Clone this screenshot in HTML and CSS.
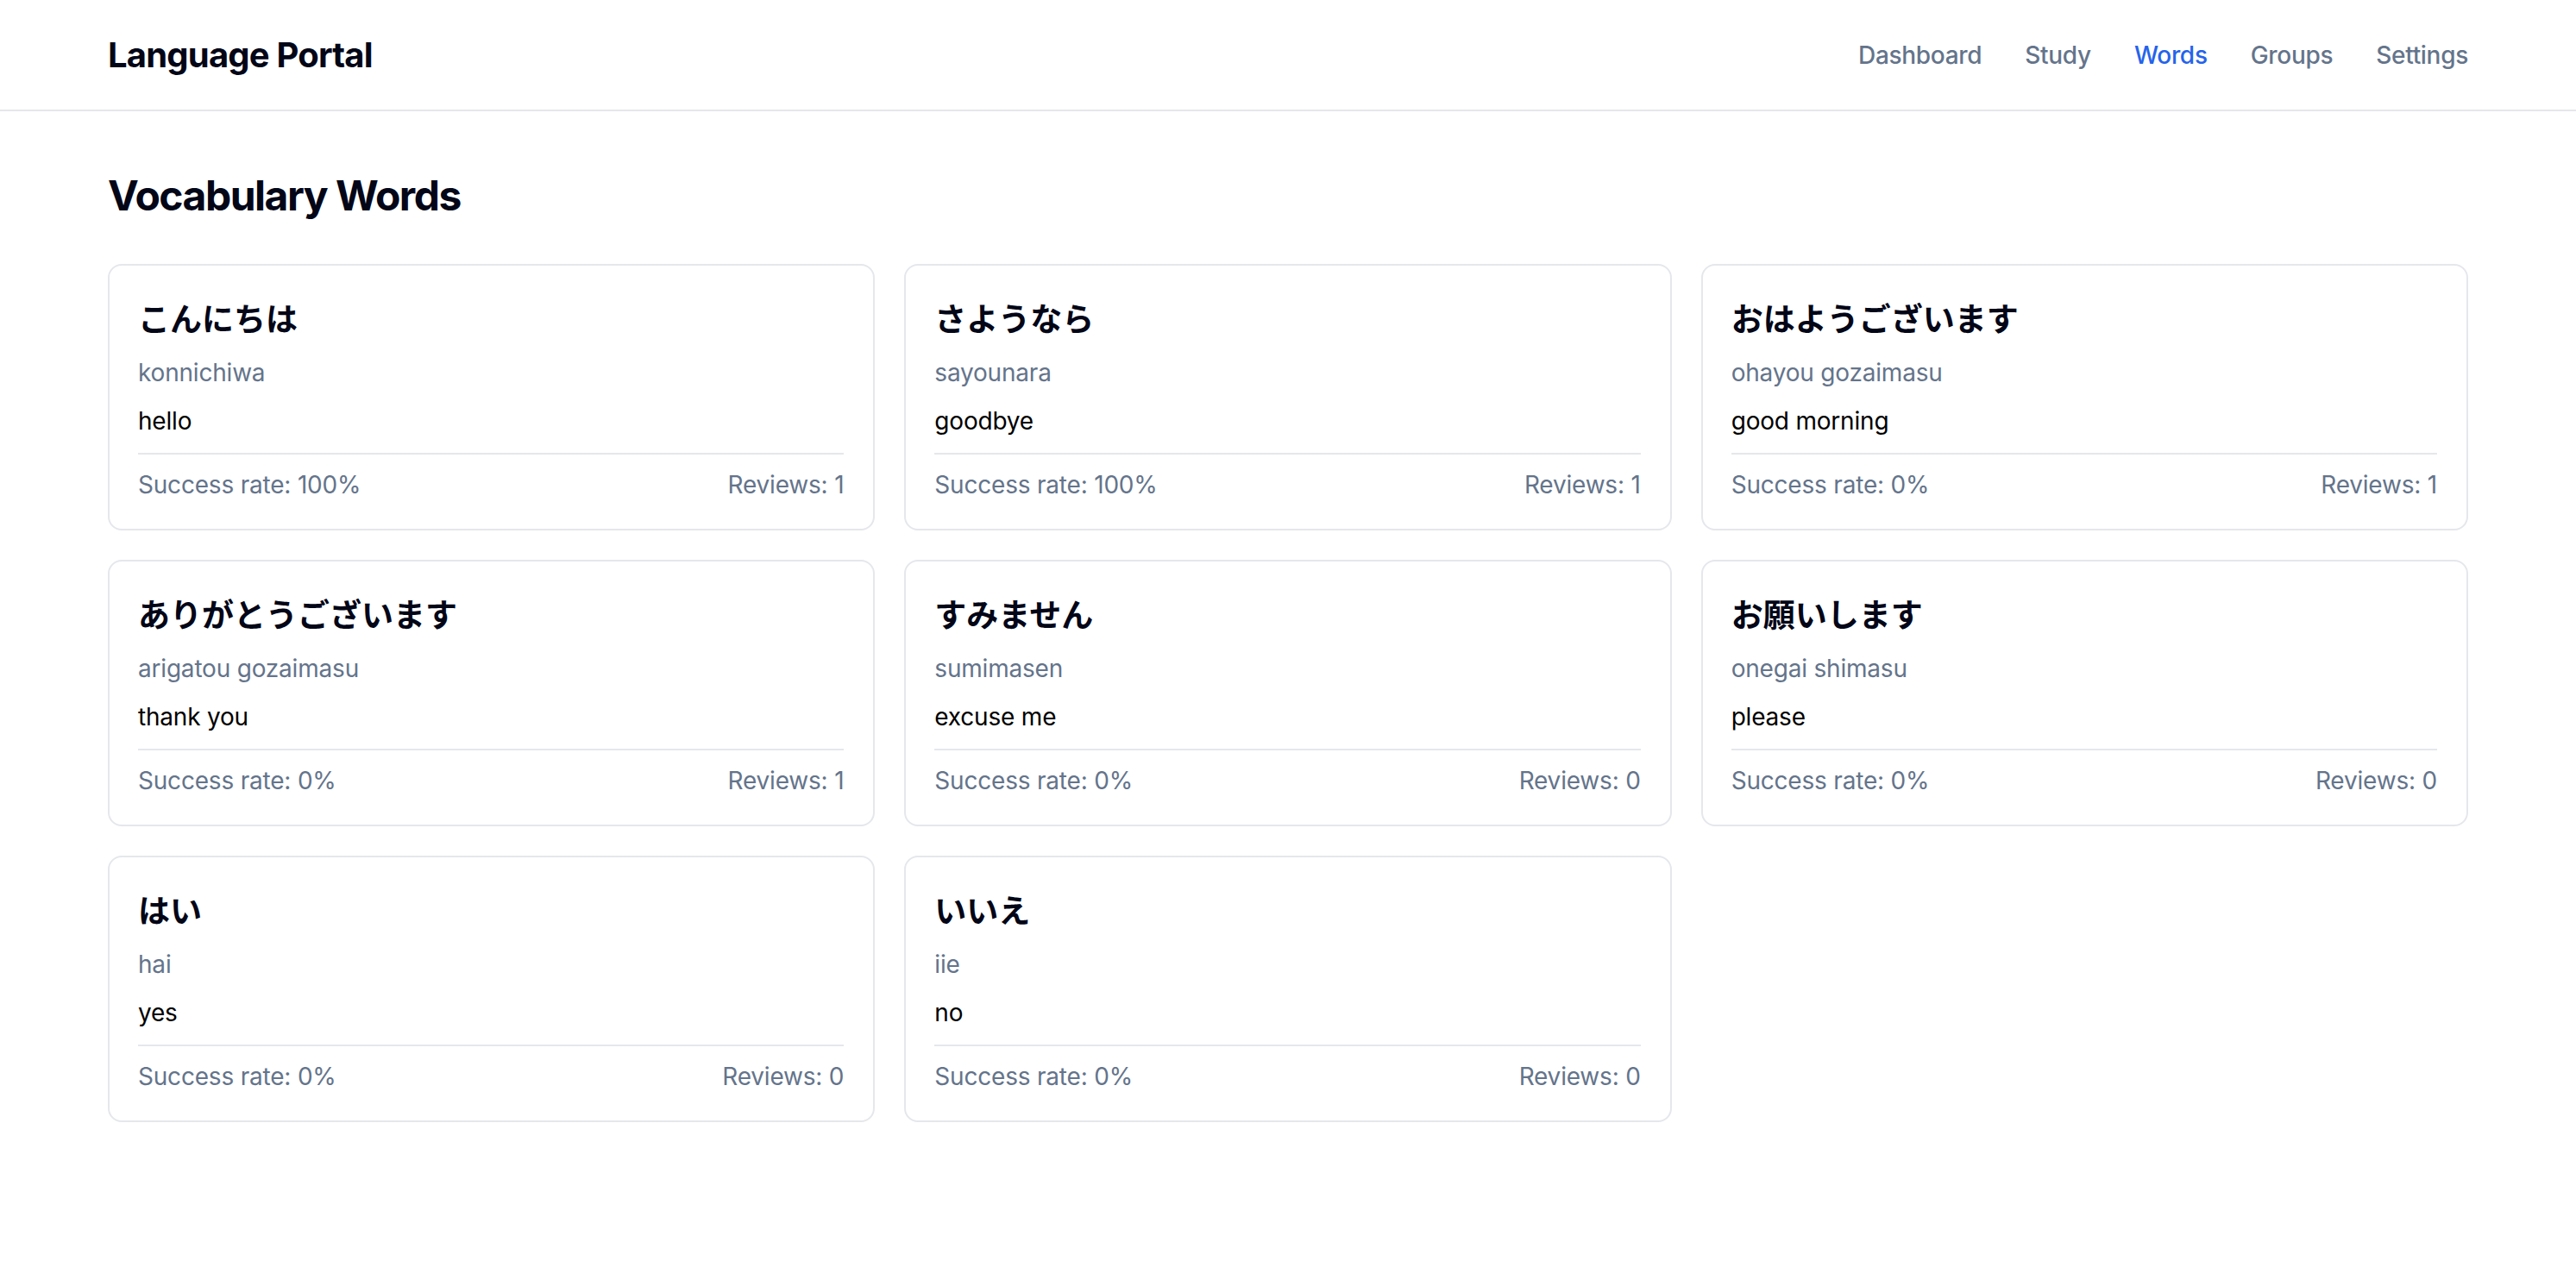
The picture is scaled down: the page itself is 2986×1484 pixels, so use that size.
FILE: index.html
```html
<!DOCTYPE html>
<html lang="en">
<head>
<meta charset="utf-8">
<title>Language Portal</title>
<link rel="stylesheet" href="styles.css">
</head>
<body>
<header class="site-header">
  <div class="container header-inner">
    <div class="brand">Language Portal</div>
    <nav class="nav">
      <a class="nav-link" href="#">Dashboard</a>
      <a class="nav-link" href="#">Study</a>
      <a class="nav-link active" href="#">Words</a>
      <a class="nav-link" href="#">Groups</a>
      <a class="nav-link" href="#">Settings</a>
    </nav>
  </div>
</header>
<main class="container main">
  <h1 class="page-title">Vocabulary Words</h1>
  <div class="grid">
    <div class="card">
      <div class="jp">こんにちは</div>
      <div class="romaji">konnichiwa</div>
      <div class="en">hello</div>
      <div class="stats"><span>Success rate: 100%</span><span>Reviews: 1</span></div>
    </div>
    <div class="card">
      <div class="jp">さようなら</div>
      <div class="romaji">sayounara</div>
      <div class="en">goodbye</div>
      <div class="stats"><span>Success rate: 100%</span><span>Reviews: 1</span></div>
    </div>
    <div class="card">
      <div class="jp">おはようございます</div>
      <div class="romaji">ohayou gozaimasu</div>
      <div class="en">good morning</div>
      <div class="stats"><span>Success rate: 0%</span><span>Reviews: 1</span></div>
    </div>
    <div class="card">
      <div class="jp">ありがとうございます</div>
      <div class="romaji">arigatou gozaimasu</div>
      <div class="en">thank you</div>
      <div class="stats"><span>Success rate: 0%</span><span>Reviews: 1</span></div>
    </div>
    <div class="card">
      <div class="jp">すみません</div>
      <div class="romaji">sumimasen</div>
      <div class="en">excuse me</div>
      <div class="stats"><span>Success rate: 0%</span><span>Reviews: 0</span></div>
    </div>
    <div class="card">
      <div class="jp">お願いします</div>
      <div class="romaji">onegai shimasu</div>
      <div class="en">please</div>
      <div class="stats"><span>Success rate: 0%</span><span>Reviews: 0</span></div>
    </div>
    <div class="card">
      <div class="jp">はい</div>
      <div class="romaji">hai</div>
      <div class="en">yes</div>
      <div class="stats"><span>Success rate: 0%</span><span>Reviews: 0</span></div>
    </div>
    <div class="card">
      <div class="jp">いいえ</div>
      <div class="romaji">iie</div>
      <div class="en">no</div>
      <div class="stats"><span>Success rate: 0%</span><span>Reviews: 0</span></div>
    </div>
  </div>
</main>
</body>
</html>
```
FILE: styles.css
```css
* { box-sizing: border-box; }
html, body { margin: 0; padding: 0; }
body {
  background: #ffffff;
  font-family: Inter, "Noto Sans CJK JP", sans-serif;
  color: #020617;
}
.container {
  padding-left: 125px;
  padding-right: 125px;
}
.site-header {
  border-bottom: 2px solid #e5e7eb;
}
.header-inner {
  height: 127px;
  display: flex;
  align-items: center;
  justify-content: space-between;
}
.brand {
  font-size: 40px;
  font-weight: 700;
  color: #020617;
  letter-spacing: -0.8px;
}
.nav {
  display: flex;
  gap: 50px;
}
.nav-link {
  font-size: 28px;
  font-weight: 500;
  color: #64748b;
  text-decoration: none;
  letter-spacing: -0.3px;
}
.nav-link.active { color: #2563eb; }
.main {
  padding-top: 66px;
  padding-bottom: 64px;
}
.page-title {
  margin: 0 0 47px 0;
  font-size: 48px;
  line-height: 64px;
  font-weight: 700;
  color: #020617;
  letter-spacing: -1.5px;
}
.grid {
  display: grid;
  grid-template-columns: repeat(3, 1fr);
  gap: 34px;
}
.card {
  border: 2px solid #e5e7eb;
  border-radius: 16px;
  padding: 34px 34px 31px 33px;
  background: #fff;
}
.jp {
  font-family: "Noto Sans CJK JP", sans-serif;
  font-size: 37px;
  line-height: 52px;
  font-weight: 600;
  color: #020617;
}
.romaji {
  margin-top: 18px;
  font-size: 28px;
  line-height: 40px;
  color: #64748b;
  letter-spacing: -0.2px;
}
.en {
  margin-top: 16px;
  font-size: 28px;
  line-height: 40px;
  color: #000;
  letter-spacing: -0.2px;
}
.stats {
  margin-top: 17px;
  border-top: 2px solid #e5e7eb;
  padding-top: 15px;
  display: flex;
  justify-content: space-between;
  font-size: 28px;
  line-height: 40px;
  color: #64748b;
  letter-spacing: -0.2px;
}
```
